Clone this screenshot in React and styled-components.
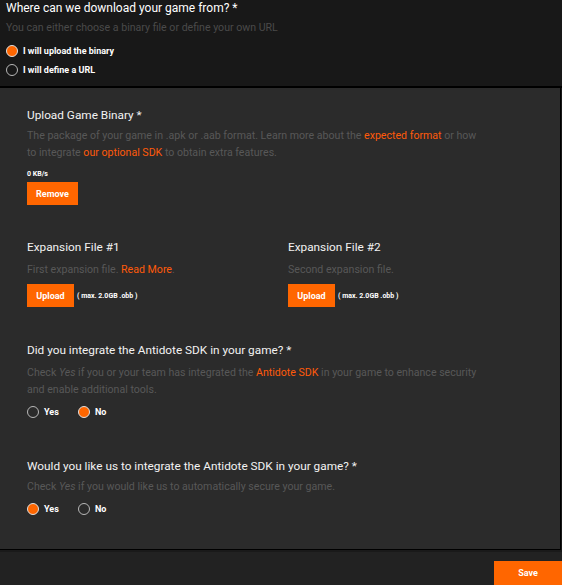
import styled, { createGlobalStyle } from "styled-components"
import React from "react";

const GlobalStyle = createGlobalStyle`
    html, body {
        margin: 0;
        padding: 0;
        background-color: #181818;
        font-family: Roboto, "Liberation Sans", sans-serif;
    }
`

const Page = styled.div`
    width: 562px;
    height: 585px;
    display: flex;
    flex-direction: column;
    overflow: hidden;
    background-color: #181818;
`

const TopSection = styled.div`
    padding: 0 6px 10px 6px;
    display: flex;
    flex-direction: column;
    border-bottom: 2px solid #000;
`

const Heading = styled.div`
    font-size: 12px;
    line-height: 16px;
    color: #fff;
`

const Hint = styled.div`
    font-size: 10.6px;
    line-height: 14px;
    color: #4a4a4a;
    margin-top: 5px;
`

const RadioStack = styled.div`
    display: flex;
    flex-direction: column;
    gap: 6px;
    margin-top: 9px;
`

const RadioRow = styled.div`
    display: flex;
    align-items: center;
    margin-top: ${props => props.$top || 0}px;
`

const RadioOption = styled.label`
    display: flex;
    align-items: center;
    gap: 5px;
    width: ${props => props.$width ? props.$width + "px" : "auto"};
    height: 13px;
    font-size: 9px;
    font-weight: 700;
    color: #fff;
`

const Circle = styled.span`
    width: 10px;
    height: 10px;
    border-radius: 50%;
    border: 1px solid ${props => props.$checked ? "#e0e0e0" : "#b8b8b8"};
    background-color: ${props => props.$checked ? "#ff6600" : "transparent"};
    flex-shrink: 0;
`

const Panel = styled.div`
    flex: 1;
    background-color: #2b2b2b;
    border-right: 1px solid #000;
    border-bottom: 1px solid #000;
    margin-right: 1px;
    padding: 19px 27px 0 27px;
    display: flex;
    flex-direction: column;
`

const Section = styled.div`
    display: flex;
    flex-direction: column;
    align-items: flex-start;
    margin-top: ${props => props.$top || 0}px;
`

const SectionTitle = styled.div`
    font-size: 11.8px;
    line-height: 16px;
    color: #f2f2f2;
`

const Description = styled.div`
    font-size: 10.6px;
    line-height: 17px;
    color: #585858;
    margin-top: ${props => props.$top || 0}px;
    max-width: 460px;
`

const Link = styled.span`
    color: #ff5a0a;
`

const Rate = styled.div`
    font-size: 7px;
    line-height: 9px;
    font-weight: 700;
    color: #fff;
    margin-top: 9px;
`

const Button = styled.button`
    height: 23px;
    width: ${props => props.$width}px;
    border: none;
    padding: 0;
    background-color: #ff6600;
    color: #fff;
    font-family: Roboto, "Liberation Sans", sans-serif;
    font-size: 9px;
    font-weight: 700;
    margin-top: ${props => props.$top || 0}px;
`

const Columns = styled.div`
    display: grid;
    grid-template-columns: 261px 1fr;
    margin-top: 34px;
`

const UploadRow = styled.div`
    display: flex;
    align-items: center;
    gap: 3px;
    margin-top: 6px;
`

const SizeNote = styled.span`
    font-size: 7px;
    font-weight: 700;
    color: #fff;
`

const Footer = styled.div`
    box-sizing: border-box;
    height: 35px;
    flex-shrink: 0;
    background-color: #222;
    border-top: 2px solid #1a1a1a;
    display: flex;
    justify-content: flex-end;
    align-items: flex-start;
    padding-top: 9px;
`

const SaveButton = styled(Button)`
    height: 24px;
    width: 68px;
    flex-shrink: 0;
`

const Radio = ({checked, width, children}) => (
    <RadioOption $width={width}>
        <Circle $checked={checked}/>
        {children}
    </RadioOption>
)

const App = () => {
    return (
        <Page>
            <GlobalStyle/>
            <TopSection>
                <Heading>Where can we download your game from? *</Heading>
                <Hint>You can either choose a binary file or define your own URL</Hint>
                <RadioStack>
                    <Radio checked>I will upload the binary</Radio>
                    <Radio>I will define a URL</Radio>
                </RadioStack>
            </TopSection>
            <Panel>
                <Section>
                    <SectionTitle>Upload Game Binary *</SectionTitle>
                    <Description $top={4}>
                        The package of your game in .apk or .aab format. Learn more about the <Link>expected format</Link> or how to integrate <Link>our optional SDK</Link> to obtain extra features.
                    </Description>
                    <Rate>0 KB/s</Rate>
                    <Button $width={51} $top={3}>Remove</Button>
                </Section>
                <Columns>
                    <Section>
                        <SectionTitle>Expansion File #1</SectionTitle>
                        <Description $top={6}>First expansion file. <Link>Read More</Link>.</Description>
                        <UploadRow>
                            <Button $width={47}>Upload</Button>
                            <SizeNote>( max. 2.0GB .obb )</SizeNote>
                        </UploadRow>
                    </Section>
                    <Section>
                        <SectionTitle>Expansion File #2</SectionTitle>
                        <Description $top={6}>Second expansion file.</Description>
                        <UploadRow>
                            <Button $width={47}>Upload</Button>
                            <SizeNote>( max. 2.0GB .obb )</SizeNote>
                        </UploadRow>
                    </Section>
                </Columns>
                <Section $top={35}>
                    <SectionTitle>Did you integrate the Antidote SDK in your game? *</SectionTitle>
                    <Description $top={6}>
                        Check <i>Yes</i> if you or your team has integrated the <Link>Antidote SDK</Link> in your game to enhance security and enable additional tools.
                    </Description>
                    <RadioRow $top={7}>
                        <Radio width={51}>Yes</Radio>
                        <Radio checked>No</Radio>
                    </RadioRow>
                </Section>
                <Section $top={40}>
                    <SectionTitle>Would you like us to integrate the Antidote SDK in your game? *</SectionTitle>
                    <Description $top={4}>
                        Check <i>Yes</i> if you would like us to automatically secure your game.
                    </Description>
                    <RadioRow $top={7}>
                        <Radio width={51} checked>Yes</Radio>
                        <Radio>No</Radio>
                    </RadioRow>
                </Section>
            </Panel>
            <Footer>
                <SaveButton>Save</SaveButton>
            </Footer>
        </Page>
    );
}

export default App
